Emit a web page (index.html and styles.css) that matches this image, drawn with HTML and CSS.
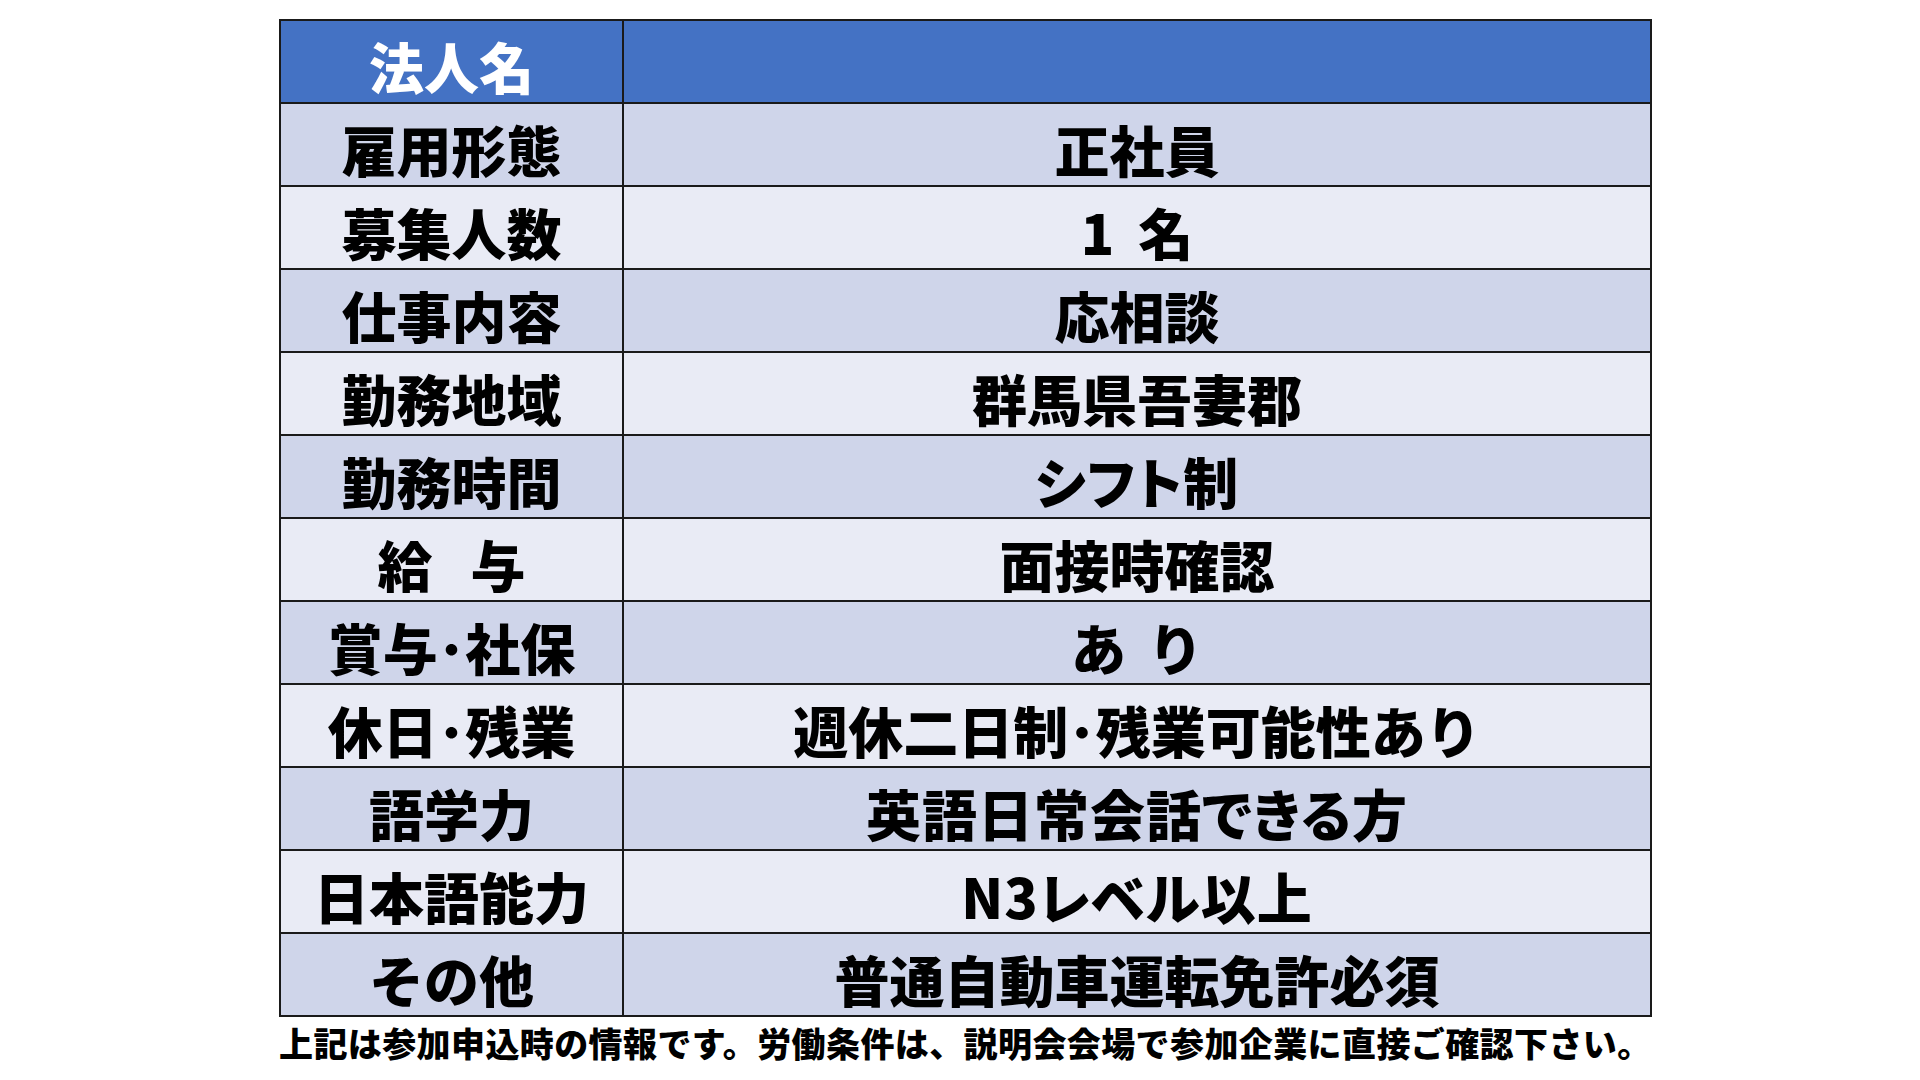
FILE: index.html
```html
<!DOCTYPE html>
<html lang="ja">
<head>
<meta charset="utf-8">
<title>求人情報</title>
<link rel="stylesheet" href="styles.css">
</head>
<body>
<div class="page">
  <table class="info">
    <tr class="head"><th>法人名</th><td></td></tr>
    <tr class="odd"><th>雇用形態</th><td>正社員</td></tr>
    <tr class="even"><th>募集人数</th><td>1<span class="gap-s"></span>名</td></tr>
    <tr class="odd"><th>仕事内容</th><td>応相談</td></tr>
    <tr class="even"><th>勤務地域</th><td>群馬県吾妻郡</td></tr>
    <tr class="odd"><th>勤務時間</th><td class="kana">シフト制</td></tr>
    <tr class="even"><th>給<span class="gap-l"></span>与</th><td>面接時確認</td></tr>
    <tr class="odd"><th>賞与･社保</th><td>あ<span class="gap-m"></span>り</td></tr>
    <tr class="even"><th>休日･残業</th><td>週休二日制･残業可能性あり</td></tr>
    <tr class="odd"><th>語学力</th><td class="kana">英語日常会話できる方</td></tr>
    <tr class="even"><th>日本語能力</th><td class="kana">N3レベル以上</td></tr>
    <tr class="odd"><th>その他</th><td>普通自動車運転免許必須</td></tr>
  </table>
  <p class="note">上記は参加申込時の情報です。労働条件は、説明会会場で参加企業に直接ご確認下さい。</p>
</div>
</body>
</html>
```
FILE: styles.css
```css
html, body {
  margin: 0;
  padding: 0;
  background: #ffffff;
}
body {
  font-family: "Noto Sans CJK JP", "Noto Sans", sans-serif;
  color: #000;
}
.page {
  padding: 19px 0 0 279px;
  width: 1373px;
}
.info {
  border-collapse: collapse;
  width: 1373px;
  table-layout: fixed;
}
.info tr {
  height: 83px;
}
.info th, .info td {
  border: 2px solid #1a1a1a;
  padding: 8px 0 0 0;
  text-align: center;
  vertical-align: middle;
  font-size: 55px;
  font-weight: 900;
  line-height: 1;
  white-space: nowrap;
}
.info th {
  width: 341px;
}
.info td.kana {
  font-feature-settings: "palt" 1;
  letter-spacing: 1px;
}
.gap-s {
  display: inline-block;
  width: 24px;
}
.gap-m {
  display: inline-block;
  width: 22px;
}
.gap-l {
  display: inline-block;
  width: 38px;
}
.head th, .head td {
  background: #4472c4;
  color: #ffffff;
}
.odd th, .odd td {
  background: #cfd5ea;
}
.even th, .even td {
  background: #e9ebf5;
}
.note {
  margin: 6px 0 0 0;
  font-size: 34px;
  font-weight: 900;
  line-height: 1.2;
  letter-spacing: 0.4px;
  white-space: nowrap;
}
```
